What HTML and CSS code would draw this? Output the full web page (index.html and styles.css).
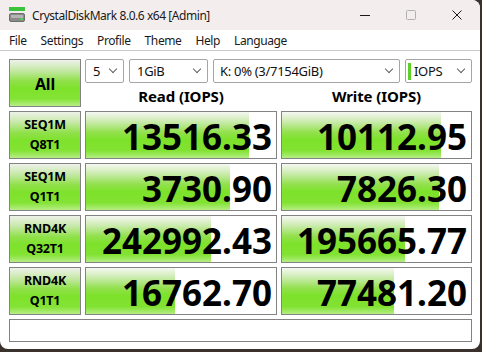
FILE: index.html
```html
<!DOCTYPE html>
<html lang="en">
<head>
    <meta charset="UTF-8">
    <meta name="viewport" content="width=device-width, initial-scale=1.0">
    <title>CrystalDiskMark 8.0.6 x64 [Admin]</title>
    <link rel="stylesheet" href="styles.css">
</head>
<body>
    <div class="window">
        <div class="titlebar">
            <svg class="app-icon" width="16" height="16" viewBox="0 0 16 16">
                <rect x="0" y="0" width="16" height="4" fill="#3cc23c"/>
                <rect x="0.5" y="6.5" width="15" height="8" rx="1.5" fill="#8a8a8a" stroke="#6e6e6e"/>
                <rect x="2" y="8" width="12" height="3" fill="#b4b4b4"/>
                <rect x="11" y="11.5" width="3" height="1.5" fill="#4cd84c"/>
            </svg>
            <span class="title">CrystalDiskMark 8.0.6 x64 [Admin]</span>
            <div class="controls">
                <span class="ctl">
                    <svg width="10" height="10" viewBox="0 0 10 10"><line x1="0" y1="5.5" x2="10" y2="5.5" stroke="#1a1a1a" stroke-width="1"/></svg>
                </span>
                <span class="ctl">
                    <svg width="10" height="10" viewBox="0 0 10 10"><rect x="0.5" y="0.5" width="9" height="9" rx="1" fill="none" stroke="#b0b0b0" stroke-width="1"/></svg>
                </span>
                <span class="ctl">
                    <svg width="10" height="10" viewBox="0 0 10 10"><path d="M0.5 0.5 L9.5 9.5 M9.5 0.5 L0.5 9.5" stroke="#1a1a1a" stroke-width="1"/></svg>
                </span>
            </div>
        </div>
        <div class="menubar">
            <span>File</span>
            <span>Settings</span>
            <span>Profile</span>
            <span>Theme</span>
            <span>Help</span>
            <span>Language</span>
        </div>
        <div class="main">
            <div class="btn btn-all">All</div>
            <div class="top">
                <div class="selects">
                    <div class="select w-count">5<i class="chev"></i></div>
                    <div class="select w-size">1GiB<i class="chev"></i></div>
                    <div class="select w-drive">K: 0% (3/7154GiB)<i class="chev"></i></div>
                    <div class="select w-unit"><b class="unit-mark"></b>IOPS<i class="chev"></i></div>
                </div>
                <div class="heads">
                    <div>Read (IOPS)</div>
                    <div>Write (IOPS)</div>
                </div>
            </div>

            <div class="btn">SEQ1M<br>Q8T1</div>
            <div class="cell"><div class="bar" style="width: 86%"></div><span class="val">13516.33</span></div>
            <div class="cell"><div class="bar" style="width: 84%"></div><span class="val">10112.95</span></div>

            <div class="btn">SEQ1M<br>Q1T1</div>
            <div class="cell"><div class="bar" style="width: 76%"></div><span class="val">3730.90</span></div>
            <div class="cell"><div class="bar" style="width: 83%"></div><span class="val">7826.30</span></div>

            <div class="btn">RND4K<br>Q32T1</div>
            <div class="cell"><div class="bar" style="width: 66%"></div><span class="val">242992.43</span></div>
            <div class="cell"><div class="bar" style="width: 65%"></div><span class="val">195665.77</span></div>

            <div class="btn">RND4K<br>Q1T1</div>
            <div class="cell"><div class="bar" style="width: 47%"></div><span class="val">16762.70</span></div>
            <div class="cell"><div class="bar" style="width: 59%"></div><span class="val">77481.20</span></div>

            <div class="comment"></div>
        </div>
    </div>
</body>
</html>
```

FILE: styles.css
```css
body {
    margin: 0;
    padding: 0;
    background: #3a312d;
    font-family: "Noto Sans", "Open Sans", sans-serif;
    color: #000;
}
.window {
    width: 480px;
    height: 349px;
    background: #fff;
    border-radius: 0 8px 8px 8px;
    overflow: hidden;
    box-sizing: border-box;
}
.titlebar {
    height: 30px;
    background: #f3eeed;
    display: flex;
    align-items: center;
}
.app-icon {
    margin-left: 9px;
    margin-right: 7px;
}
.title {
    font-size: 12px;
    color: #1a1a1a;
    letter-spacing: -0.45px;
}
.controls {
    margin-left: auto;
    display: flex;
    height: 30px;
}
.ctl {
    width: 46px;
    display: flex;
    align-items: center;
    justify-content: center;
}
.menubar {
    height: 20px;
    display: flex;
    align-items: center;
    gap: 14px;
    padding-left: 9px;
    font-size: 12px;
    color: #1a1a1a;
    letter-spacing: -0.4px;
    border-bottom: 1px solid #c8c8c8;
    background: #fff;
}
.main {
    display: grid;
    grid-template-columns: 72px 192px 191px;
    grid-template-rows: 48px 48px 48px 48px 48px 23px;
    gap: 4px;
    padding: 8px 0 0 9px;
}
.btn {
    box-sizing: border-box;
    border: 1px solid #838383;
    background: linear-gradient(to bottom, #eef2ea 0%, #c6e9a8 22%, #8fe048 46%, #7ee22c 62%, #84e334 84%, #b6ee86 100%);
    display: flex;
    align-items: center;
    justify-content: center;
    text-align: center;
    font-weight: bold;
    font-size: 12.5px;
    line-height: 20px;
    letter-spacing: -0.2px;
}
.btn-all {
    font-size: 16px;
    padding-top: 2px;
}
.top {
    grid-column: 2 / 4;
    display: flex;
    flex-direction: column;
}
.selects {
    display: flex;
    gap: 5px;
    height: 24px;
}
.select {
    box-sizing: border-box;
    height: 24px;
    border: 1px solid #a6a6a6;
    border-radius: 2px;
    background: #fff;
    display: flex;
    align-items: center;
    padding-left: 7px;
    font-size: 13px;
    color: #111;
    letter-spacing: -0.3px;
}
.w-count { width: 39px; }
.w-size { width: 79px; }
.w-drive { width: 187px; padding-left: 6px; }
.w-unit { width: 67px; padding-left: 2px; }
.unit-mark {
    width: 3px;
    height: 17px;
    background: #5fd02a;
    margin-right: 3px;
}
.chev {
    margin-left: auto;
    margin-right: 7px;
    width: 5px;
    height: 5px;
    border-right: 1px solid #606060;
    border-bottom: 1px solid #606060;
    transform: translateY(-2px) rotate(45deg);
}
.heads {
    flex: 1;
    display: grid;
    grid-template-columns: 192px 191px;
    gap: 4px;
    align-items: center;
    text-align: center;
    font-weight: bold;
    font-size: 15px;
    letter-spacing: -0.1px;
    padding-top: 2px;
}
.cell {
    box-sizing: border-box;
    border: 1px solid #838383;
    background: #fff;
    display: grid;
    overflow: hidden;
}
.bar {
    grid-area: 1 / 1;
    height: 100%;
    background: linear-gradient(to bottom, #f6f8f3 0%, #cdecb2 20%, #93e04e 44%, #7de22a 60%, #82e232 84%, #b4ee84 100%);
}
.val {
    grid-area: 1 / 1;
    justify-self: end;
    align-self: center;
    padding-right: 4px;
    padding-top: 3px;
    font-weight: bold;
    font-size: 35px;
    line-height: 1;
    letter-spacing: 0;
}
.comment {
    grid-column: 1 / 4;
    box-sizing: border-box;
    border: 1px solid #838383;
    background: #fff;
}
```
